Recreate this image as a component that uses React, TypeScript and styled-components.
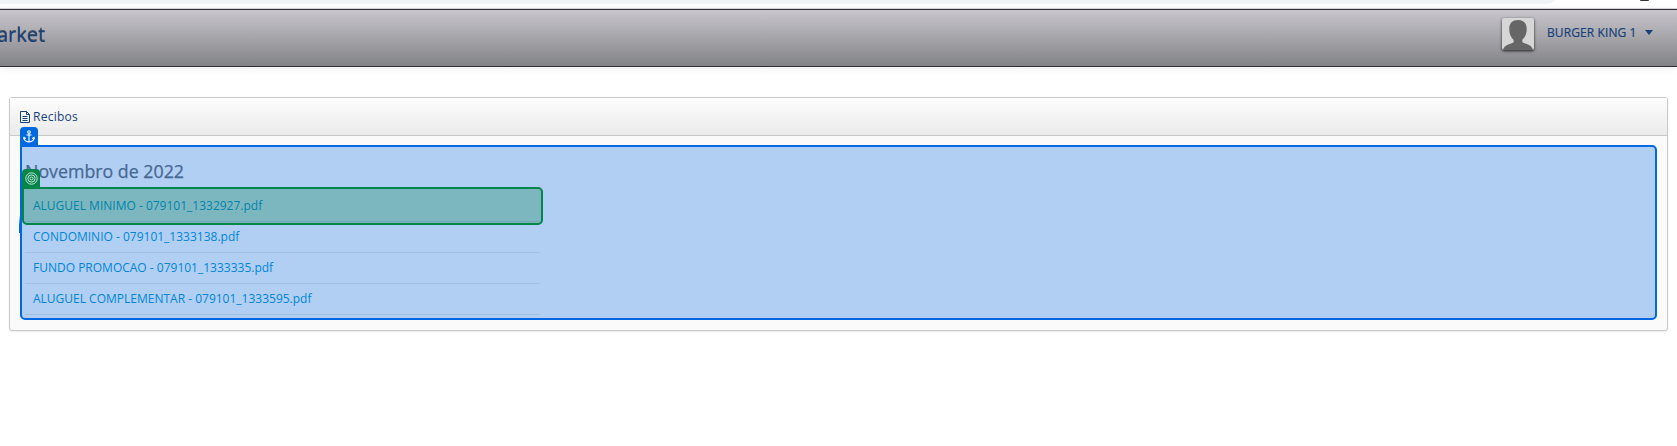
import React from "react";
import styled, { createGlobalStyle } from "styled-components";

const Global = createGlobalStyle`
  * { box-sizing: border-box; }
  body { margin: 0; background: #fff; font-family: "Open Sans", sans-serif; overflow: hidden; }
`;

const Page = styled.div`
  height: 446px;
  overflow: hidden;
`;

const BrowserStrip = styled.div`
  height: 9px;
  display: flex;
  justify-content: space-between;
  padding-right: 28px;
`;

const AddressBar = styled.div`
  width: 1555px;
  height: 4px;
  background: #f1f3f4;
  border-bottom-right-radius: 12px 4px;
`;

const BrowserMark = styled.div`
  width: 9px;
  height: 1px;
  background: #33303a;
  border-radius: 0 0 4px 4px;
`;

const Header = styled.header`
  height: 58px;
  display: flex;
  justify-content: space-between;
  border-top: 1px solid #312d35;
  border-bottom: 1px solid #312d35;
  background: linear-gradient(#c8c6cc, #828387);
  box-shadow: 0 -1px 0 #d5d5d7, 0 1px 8px rgba(0, 0, 0, 0.08);
`;

const Brand = styled.div`
  margin-left: -3px;
  padding-top: 11px;
  font-size: 20px;
  line-height: 28px;
  color: #17417a;
  text-shadow: 0 -1px 0 rgba(0, 0, 0, 0.5);
`;

const User = styled.div`
  display: flex;
  align-items: flex-start;
  padding: 8px 24px 0 0;
`;

const Avatar = styled.svg`
  width: 32px;
  height: 32px;
  border-radius: 2px;
  background: #d6d6d6;
  box-shadow: 0 1px 3px rgba(0, 0, 0, 0.8);
`;

const UserName = styled.span`
  width: 90px;
  margin: 6px 8px 0 13px;
  white-space: nowrap;
  font-size: 12px;
  line-height: 17px;
  font-weight: 500;
  letter-spacing: 0.1px;
  color: #17417a;
  -webkit-text-stroke: 0.2px #17417a;
`;

const Caret = styled.span`
  margin-top: 12px;
  border: 4px solid transparent;
  border-top: 5px solid #17417a;
  border-bottom: 0;
`;

const Panel = styled.section`
  position: relative;
  height: 234px;
  margin: 30px 9px 0;
  border: 1px solid #c9c9c9;
  border-radius: 3px;
  background: #fafafa;
  box-shadow: 0 1px 2px rgba(0, 0, 0, 0.08);
`;

const PanelHeader = styled.div`
  height: 38px;
  display: flex;
  align-items: center;
  gap: 2px;
  padding: 0 0 0 10px;
  border-bottom: 1px solid #c9c9c9;
  background: linear-gradient(#fdfdfd, #eaeaea);
  font-size: 12px;
  letter-spacing: 0.25px;
  color: #17417a;
`;

const Month = styled.h2`
  margin: 0;
  padding: 23px 0 0 15px;
  font-size: 17.8px;
  line-height: 24px;
  font-weight: 500;
  color: #64666e;
  -webkit-text-stroke: 0.25px #64666e;
`;

const Files = styled.ul`
  width: 515px;
  list-style: none;
  margin: 8px 0 0 15px;
  padding: 0;
`;

const FileRow = styled.li`
  height: 31px;
  padding: 0 8px;
  border-bottom: 1px solid #e4e4e4;
  font-size: 12px;
  line-height: 30px;
  color: #008fd0;
`;

const Overlay = styled.div<{ $tone: string; $fill: string }>`
  position: absolute;
  border: 2px solid ${(p) => p.$tone};
  border-radius: 0 5px 5px 5px;
  background: ${(p) => p.$fill};
`;

const AnchorOverlay = styled(Overlay)`
  left: 10px;
  right: 10px;
  top: 47px;
  height: 175px;
`;

const TargetOverlay = styled(Overlay)`
  left: 0;
  top: 40px;
  width: 521px;
  height: 38px;
`;

const Badge = styled.div<{ $tone: string }>`
  position: absolute;
  left: -2px;
  top: -20px;
  width: 18px;
  height: 18px;
  display: flex;
  align-items: center;
  justify-content: center;
  border-radius: 4px 4px 0 0;
  background: ${(p) => p.$tone};
`;

const Sliver = styled.svg`
  position: absolute;
  left: -3px;
  top: 68px;
`;

const blue = "#0068e1";
const green = "#04854a";

const files = [
  "ALUGUEL MINIMO - 079101_1332927.pdf",
  "CONDOMINIO - 079101_1333138.pdf",
  "FUNDO PROMOCAO - 079101_1333335.pdf",
  "ALUGUEL COMPLEMENTAR - 079101_1333595.pdf",
];

export default function App() {
  return (
    <Page>
      <Global />
      <BrowserStrip>
        <AddressBar />
        <BrowserMark />
      </BrowserStrip>
      <Header>
        <Brand>arket</Brand>
        <User>
          <Avatar viewBox="0 0 33 33">
            <path
              d="M16.500 2C11 2 7.500 5.500 7.500 11C7.500 17 9.500 20 12 22.500V25C9 27 2 27.500 1 33H32C31 27.500 24 27 21 25V22.500C23.500 20 25.500 17 25.500 11C25.500 5.500 22 2 16.500 2Z"
              fill="#666"
            />
          </Avatar>
          <UserName>BURGER KING 1</UserName>
          <Caret />
        </User>
      </Header>
      <Panel>
        <PanelHeader>
          <svg width="11" height="12" viewBox="0 0 11 12" fill="none" stroke="#17417a">
            <path d="M.5 .5H6.500L9.500 3.500V11.500H.5ZM6.500 .5V3.500H9.500M2.500 5.500H7.500M2.500 7.500H7.500M2.500 9.500H7.500" />
          </svg>
          Recibos
        </PanelHeader>
        <Month>Novembro de 2022</Month>
        <Files>
          {files.map((f) => (
            <FileRow key={f}>{f}</FileRow>
          ))}
        </Files>
        <AnchorOverlay $tone={blue} $fill="rgba(8, 108, 228, 0.3)">
          <Badge $tone={blue}>
            <svg width="12" height="13" viewBox="0 0 12 13" fill="none" stroke="#fff" strokeWidth="1.1">
              <circle cx="6" cy="2" r="1.300" />
              <path d="M6 3.300V12M3.500 5H8.500M1 7.500C1 10.500 3.500 11.800 6 12C8.500 11.800 11 10.500 11 7.500M.4 9L1 7.300L2.800 8.500M11.600 9L11 7.300L9.200 8.500" />
            </svg>
          </Badge>
          <Sliver width="2" height="18">
            <path d="M1 0H2V18H0V10Z" fill={blue} />
          </Sliver>
          <TargetOverlay $tone={green} $fill="rgba(4, 128, 74, 0.3)">
            <Badge $tone={green}>
              <svg width="13" height="13" viewBox="0 0 13 13" fill="none" stroke="#c9e6d8">
                <circle cx="6.500" cy="6.500" r="5.700" />
                <circle cx="6.500" cy="6.500" r="3.600" />
                <circle cx="6.500" cy="6.500" r="1.500" />
              </svg>
            </Badge>
          </TargetOverlay>
        </AnchorOverlay>
      </Panel>
    </Page>
  );
}
